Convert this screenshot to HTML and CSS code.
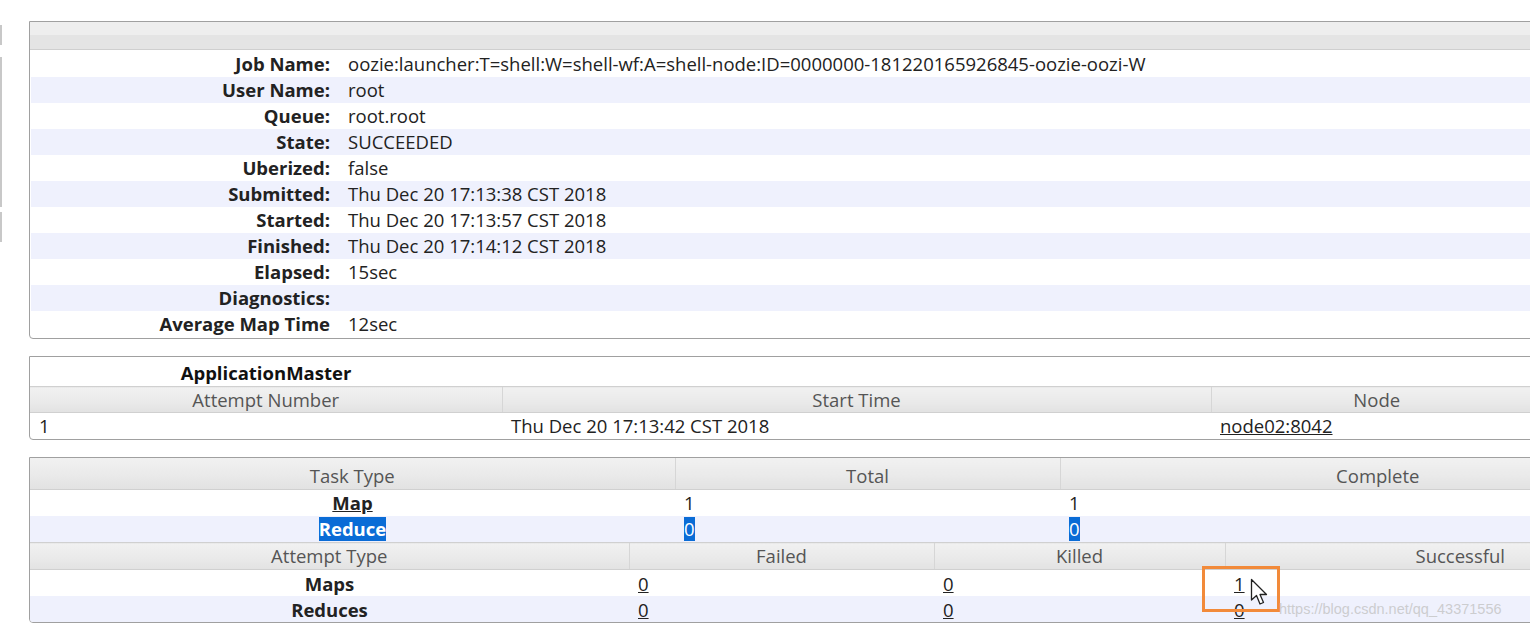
FILE: index.html
```html
<!DOCTYPE html>
<html>
<head>
<meta charset="utf-8">
<link rel="stylesheet" href="styles.css">
</head>
<body>
<div class="page">
  <div class="rail">
    <div class="seg seg1"></div>
    <div class="seg seg2"></div>
    <div class="seg seg3"></div>
  </div>
  <div class="content">
    <div class="box box-info">
      <div class="info-head"></div>
      <table class="info">
        <tr><th>Job Name:</th><td>oozie:launcher:T=shell:W=shell-wf:A=shell-node:ID=0000000-181220165926845-oozie-oozi-W</td></tr>
        <tr class="alt"><th>User Name:</th><td>root</td></tr>
        <tr><th>Queue:</th><td>root.root</td></tr>
        <tr class="alt"><th>State:</th><td>SUCCEEDED</td></tr>
        <tr><th>Uberized:</th><td>false</td></tr>
        <tr class="alt"><th>Submitted:</th><td>Thu Dec 20 17:13:38 CST 2018</td></tr>
        <tr><th>Started:</th><td>Thu Dec 20 17:13:57 CST 2018</td></tr>
        <tr class="alt"><th>Finished:</th><td>Thu Dec 20 17:14:12 CST 2018</td></tr>
        <tr><th>Elapsed:</th><td>15sec</td></tr>
        <tr class="alt"><th>Diagnostics:</th><td></td></tr>
        <tr><th>Average Map Time</th><td>12sec</td></tr>
      </table>
    </div>

    <div class="box box-am">
      <table class="grid am">
        <colgroup><col class="c-am1"><col class="c-am2"><col class="c-am3"></colgroup>
        <tr class="caption"><th>ApplicationMaster</th><th></th><th></th></tr>
        <tr class="head"><th>Attempt Number</th><th>Start Time</th><th>Node</th></tr>
        <tr class="row"><td>1</td><td>Thu Dec 20 17:13:42 CST 2018</td><td><a class="lnk" href="#">node02:8042</a></td></tr>
      </table>
    </div>

    <div class="box box-tasks">
      <table class="grid tasks">
        <colgroup><col class="c-t1"><col class="c-t2"><col class="c-t3"></colgroup>
        <tr class="head tall"><th>Task Type</th><th>Total</th><th>Complete</th></tr>
        <tr class="row"><td class="center"><a class="lnk bold" href="#">Map</a></td><td>1</td><td>1</td></tr>
        <tr class="row alt"><td class="center"><span class="sel bold">Reduce</span></td><td><span class="sel">0</span></td><td><span class="sel">0</span></td></tr>
      </table>
      <table class="grid attempts">
        <colgroup><col class="c-a1"><col class="c-a2"><col class="c-a3"><col class="c-a4"></colgroup>
        <tr class="head"><th>Attempt Type</th><th>Failed</th><th>Killed</th><th>Successful</th></tr>
        <tr class="row"><td class="center bold">Maps</td><td><a class="lnk" href="#">0</a></td><td><a class="lnk" href="#">0</a></td><td><a class="lnk" href="#">1</a></td></tr>
        <tr class="row alt"><td class="center bold">Reduces</td><td><a class="lnk" href="#">0</a></td><td><a class="lnk" href="#">0</a></td><td><a class="lnk" href="#">0</a></td></tr>
      </table>
    </div>
  </div>

  <div class="highlight"></div>
  <svg class="cursor" width="20" height="30" viewBox="0 0 20 30">
    <path d="M1.5 1.5 L1.5 22 L6.5 17.5 L10 26 L13.5 24.5 L10 16.5 L16.5 16.5 Z" fill="#fff" stroke="#222" stroke-width="1.3" stroke-linejoin="round"/>
  </svg>
  <div class="watermark">https://blog.csdn.net/qq_43371556</div>
</div>
</body>
</html>
```

FILE: styles.css
```css
html, body {
  margin: 0;
  padding: 0;
  overflow: hidden;
  background: #ffffff;
}

body {
  font-family: "Open Sans", "Noto Sans", "Liberation Sans", sans-serif;
  font-size: 18.5px;
  color: #222;
}

.page {
  position: relative;
  display: flex;
  width: 1530px;
  height: 630px;
  overflow: hidden;
}

.rail {
  width: 29px;
  flex: none;
  display: flex;
  flex-direction: column;
}

.seg {
  width: 2px;
  background: #c8c8c8;
}
.seg1 { margin-top: 25px; height: 20px; }
.seg2 { margin-top: 12px; height: 150px; }
.seg3 { margin-top: 5px; height: 30px; }

.content {
  padding-top: 21px;
  display: flex;
  flex-direction: column;
  flex: none;
}

.box {
  border: 1px solid #a0a0a0;
  border-radius: 0 0 4px 4px;
  background: #fff;
  overflow: hidden;
}

.box-info { width: 1540px; height: 316px; }
.box-am { width: 1512px; margin-top: 17px; }
.box-tasks { width: 1665px; margin-top: 17px; }

.info-head {
  height: 27px;
  background: linear-gradient(#eeeeee 0, #eeeeee 50%, #e4e4e4 50%, #e4e4e4 100%);
  border-bottom: 1px solid #cfcfcf;
  margin: 0 0 1px 0;
}

table {
  border-collapse: collapse;
  border-spacing: 0;
}

.info {
  width: calc(100% - 2px);
  margin-left: 1px;
}

.info th, .info td {
  height: 26px;
  padding: 0;
  line-height: 22px;
  vertical-align: middle;
  white-space: nowrap;
}

.info th {
  width: 299px;
  text-align: right;
  font-weight: 700;
  padding-right: 8px;
}

.info td {
  padding-left: 10px;
}

.alt { background: #eff1fd; }

.grid {
  table-layout: fixed;
  width: 100%;
}

.c-am1 { width: 472px; }
.c-am2 { width: 709px; }
.c-am3 { width: auto; }

.c-t1 { width: 645px; }
.c-t2 { width: 385px; }
.c-t3 { width: auto; }

.c-a1 { width: 599px; }
.c-a2 { width: 305px; }
.c-a3 { width: 291px; }
.c-a4 { width: auto; }

.grid th, .grid td {
  padding: 0 9px;
  white-space: nowrap;
  overflow: hidden;
  line-height: 22px;
}

.caption th {
  height: 27px;
  font-weight: 700;
  text-align: center;
  color: #111;
  background: #fff;
  vertical-align: middle;
  padding-top: 2px;
}

.head th {
  height: 25px;
  font-weight: 400;
  text-align: center;
  color: #555;
  background: linear-gradient(#f1f1f1 0, #eaeaea 55%, #e2e2e2 100%);
  border-top: 1px solid #d0d0d0;
  border-bottom: 1px solid #d0d0d0;
  border-left: 1px solid #d6d6d6;
}
.head th:first-child { border-left: none; }

.tasks .head th { border-top: none; height: 29px; vertical-align: bottom; padding-bottom: 2px; }

.attempts .head th { height: 26px; }

.row td {
  height: 26px;
  text-align: left;
  color: #222;
}

.attempts .row td { height: 25px; padding-top: 1px; }

.center { text-align: center !important; }
.bold { font-weight: 700; }

.lnk {
  color: #222;
  text-decoration: underline;
}

.sel {
  display: inline-block;
  line-height: 24px;
  background: #0a6cd6;
  color: #fff;
}

.highlight {
  position: absolute;
  left: 1202px;
  top: 566px;
  width: 72px;
  height: 40px;
  border: 3px solid #f28a3a;
}

.cursor {
  position: absolute;
  left: 1250px;
  top: 578px;
}

.watermark {
  position: absolute;
  left: 1279px;
  top: 601px;
  font-family: "Liberation Sans", Arial, sans-serif;
  font-size: 14.5px;
  color: rgba(195, 195, 195, 0.8);
}
```
